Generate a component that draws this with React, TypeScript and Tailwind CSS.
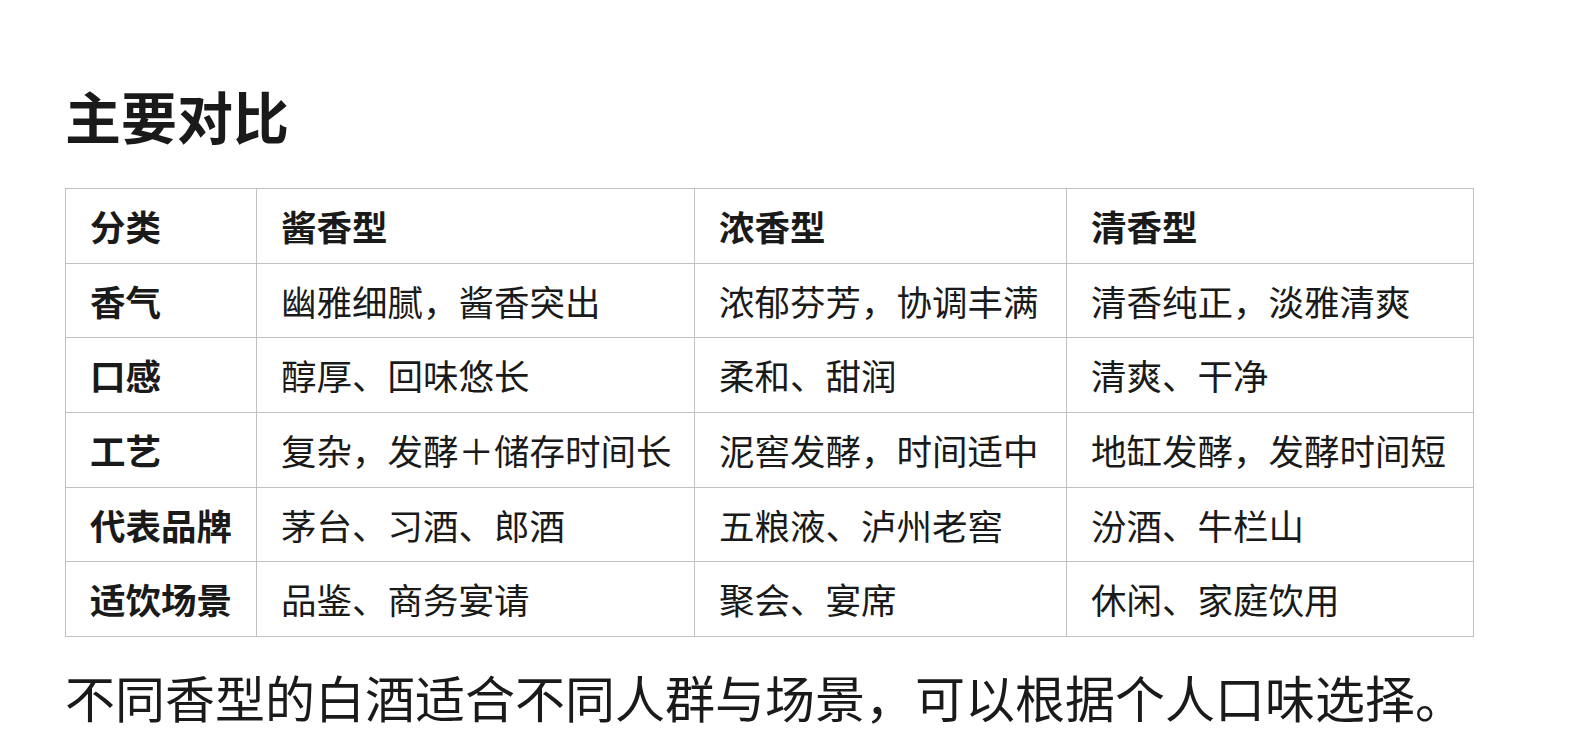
import React from "react";

const rows: string[][] = [
  ["香气", "幽雅细腻，酱香突出", "浓郁芬芳，协调丰满", "清香纯正，淡雅清爽"],
  ["口感", "醇厚、回味悠长", "柔和、甜润", "清爽、干净"],
  ["工艺", "复杂，发酵＋储存时间长", "泥窖发酵，时间适中", "地缸发酵，发酵时间短"],
  ["代表品牌", "茅台、习酒、郎酒", "五粮液、泸州老窖", "汾酒、牛栏山"],
  ["适饮场景", "品鉴、商务宴请", "聚会、宴席", "休闲、家庭饮用"],
];

export default function App() {
  return (
    <div
      className="min-h-[747px] w-full bg-white pl-[65px] pt-[87px] text-[#1a1a1a]"
      style={{ fontFamily: '"Noto Sans CJK SC", "Noto Sans", sans-serif' }}
    >
      <h1 className="text-[56px] font-bold leading-[56px]">主要对比</h1>
      <table className="mt-[45px] w-[1408px] table-fixed border-collapse">
        <colgroup>
          <col className="w-[191px]" />
          <col className="w-[438px]" />
          <col className="w-[372px]" />
          <col className="w-[407px]" />
        </colgroup>
        <thead>
          <tr className="h-[74.67px]">
            {["分类", "酱香型", "浓香型", "清香型"].map((h) => (
              <th
                key={h}
                className="border border-[#c0c0c0] px-[24px] text-left text-[35.5px] font-bold leading-none"
              >
                {h}
              </th>
            ))}
          </tr>
        </thead>
        <tbody>
          {rows.map((r) => (
            <tr key={r[0]} className="h-[74.67px]">
              {r.map((c, i) => (
                <td
                  key={i}
                  className={`whitespace-nowrap border border-[#c0c0c0] px-[24px] text-[35.5px] leading-none ${
                    i === 0 ? "font-bold" : "font-normal"
                  }`}
                >
                  {c}
                </td>
              ))}
            </tr>
          ))}
        </tbody>
      </table>
      <p className="mt-[34px] text-[50px] leading-[50px]">
        不同香型的白酒适合不同人群与场景，可以根据个人口味选择。
      </p>
    </div>
  );
}
